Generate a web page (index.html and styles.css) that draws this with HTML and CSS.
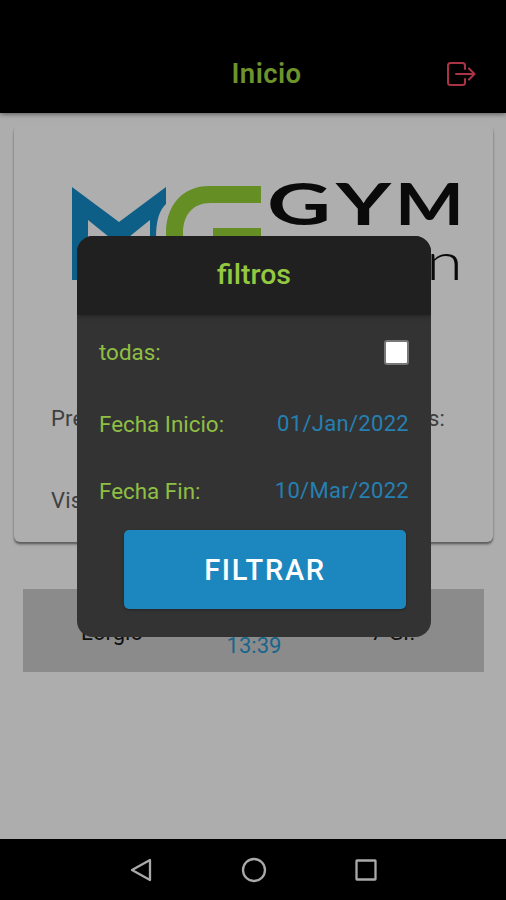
FILE: index.html
```html
<!DOCTYPE html>
<html lang="es">
<head>
<meta charset="utf-8">
<title>Inicio</title>
<link rel="stylesheet" href="styles.css">
</head>
<body>
<div class="screen">
  <header class="topbar">
    <h1 class="topbar-title">Inicio</h1>
    <svg class="logout" viewBox="0 0 30 26" fill="none" stroke="#aa3446" stroke-width="2" stroke-linecap="round" stroke-linejoin="round">
      <path d="M19 8V4.5Q19 2 16.500 2H4.500Q2 2 2 4.500V21.500Q2 24 4.500 24H16.500Q19 24 19 21.500V18M10 13H28M23 7.500L28.500 13L23 18.500"/>
    </svg>
  </header>
  <main class="content">
    <section class="card">
      <svg class="brand" viewBox="0 0 390 104">
        <path fill="#0e5f88" d="M0 5L47 40L94 5V22Q84 31 84 55V98H78V38L47 63L16 38V98H0Z"/>
        <path fill="#658e25" d="M189 4H137C111 4 94 23 94 51C94 79 111 98 137 98H189V46H141V62H172V82H137C121 82 111 70 111 51C111 33 121 21 138 21H189Z"/>
        <g class="brand-name">
          <text x="195" y="42.500" textLength="64" lengthAdjust="spacingAndGlyphs">G</text>
          <text x="264" y="42.500" textLength="55" lengthAdjust="spacingAndGlyphs">Y</text>
          <text x="323" y="42.500" textLength="69" lengthAdjust="spacingAndGlyphs">M</text>
        </g>
        <text class="brand-sub" x="354" y="98" textLength="37" lengthAdjust="spacingAndGlyphs">n</text>
      </svg>
      <div class="stat"><span>Pre</span><span>s:</span></div>
      <div class="stat"><span>Vis</span></div>
    </section>
    <section class="record">
      <span>Lorgio</span>
      <span class="record-time">13:39</span>
      <span>7 Gr.</span>
    </section>
  </main>
  <nav class="navbar">
    <svg class="nav-icon" viewBox="0 0 26 26"><path d="M21 3V23L3 13Z"/></svg>
    <svg class="nav-icon" viewBox="0 0 26 26"><circle cx="13" cy="13" r="11"/></svg>
    <svg class="nav-icon" viewBox="0 0 26 26"><rect x="3.500" y="3.500" width="19" height="19" rx=".5"/></svg>
  </nav>
  <form class="dialog">
    <h2 class="dialog-title">filtros</h2>
    <div class="dialog-body">
      <label class="field field-all"><span>todas:</span><input class="check" type="checkbox"></label>
      <div class="field field-start"><span>Fecha Inicio:</span><span class="date">01/Jan/2022</span></div>
      <div class="field field-end"><span>Fecha Fin:</span><span class="date">10/Mar/2022</span></div>
      <button class="submit" type="button">FILTRAR</button>
    </div>
  </form>
</div>
</body>
</html>
```

FILE: styles.css
```css
* { box-sizing: border-box; }
body { margin: 0; font-family: Roboto, sans-serif; }
.screen {
  position: relative;
  display: flex;
  flex-direction: column;
  width: 506px;
  height: 900px;
  overflow: hidden;
  background: #adadad;
}
.topbar {
  display: grid;
  grid-template-columns: 1fr auto 1fr;
  align-items: center;
  height: 113px;
  padding: 34px 30px 0 57px;
  background: #000;
  box-shadow: 0 1px 5px rgba(0, 0, 0, .5);
}
.topbar-title {
  grid-column: 2;
  margin: 0;
  font-size: 27.500px;
  font-weight: 600;
  letter-spacing: .4px;
  color: #6d932c;
}
.logout { justify-self: end; width: 30px; height: 26px; }
.content { flex: 1; padding: 12px 13px 0 14px; }
.card {
  height: 417px;
  padding: 55px 32px 0 37px;
  border-radius: 6px;
  background: #aeaeae;
  box-shadow: 0 2px 2px rgba(0, 0, 0, .38), 0 3px 3px rgba(0, 0, 0, .14);
}
.brand { display: block; width: 390px; height: 104px; margin: 2px 0 0 21px; overflow: visible; }
.brand-name { font: 700 57px Lato, sans-serif; fill: #0a0a0a; }
.brand-sub { font: 300 51px Lato, sans-serif; fill: #0a0a0a; }
.stat {
  display: flex;
  justify-content: space-between;
  margin-top: 119px;
  padding-right: 16px;
  font-size: 22px;
  line-height: 28px;
  letter-spacing: .2px;
  color: #404040;
}
.stat + .stat { margin-top: 54px; }
.record {
  display: grid;
  grid-template-columns: 178px 106px 172px;
  align-items: start;
  height: 83px;
  margin: 47px 9px 0;
  padding-top: 30px;
  background: #8b8b8b;
  text-align: center;
  font-size: 22px;
  line-height: 28px;
  color: #101010;
}
.record-time { padding-top: 13px; color: #19658c; }
.navbar {
  display: flex;
  justify-content: center;
  gap: 86px;
  height: 61px;
  padding: 18px 0 0 2px;
  background: #000;
}
.nav-icon { width: 26px; height: 26px; fill: none; stroke: #aaa; stroke-width: 2.3; stroke-linejoin: round; }
.dialog {
  position: absolute;
  top: 236px;
  left: 77px;
  width: 354px;
  height: 401px;
  overflow: hidden;
  border-radius: 16px;
  background: #333;
}
.dialog-title {
  height: 79px;
  margin: 0;
  background: #202020;
  box-shadow: 0 1px 5px rgba(0, 0, 0, .35);
  text-align: center;
  font-size: 28.500px;
  font-weight: 500;
  line-height: 78px;
  color: #94c841;
}
.dialog-body { display: flex; flex-direction: column; padding: 0 22px; }
.field {
  display: flex;
  justify-content: space-between;
  align-items: center;
  font-size: 22.400px;
  line-height: 28px;
  color: #8fbf43;
}
.field-all { margin-top: 23px; }
.field-start { margin-top: 44px; }
.field-end { margin-top: 39px; }
.date { font-size: 22px; letter-spacing: .3px; color: #2580b2; }
.check {
  appearance: none;
  width: 25px;
  height: 25px;
  margin: 0;
  border: 2px solid #777;
  border-radius: 3px;
  background: #fff;
}
.submit {
  align-self: flex-end;
  width: 282px;
  height: 79px;
  margin: 25px 3px 0 0;
  padding: 0;
  border: 0;
  border-radius: 5px;
  background: #1c87bf;
  box-shadow: 0 1px 3px rgba(0, 0, 0, .3);
  font: 500 29px Roboto, sans-serif;
  letter-spacing: 1.7px;
  color: #fff;
}
```
